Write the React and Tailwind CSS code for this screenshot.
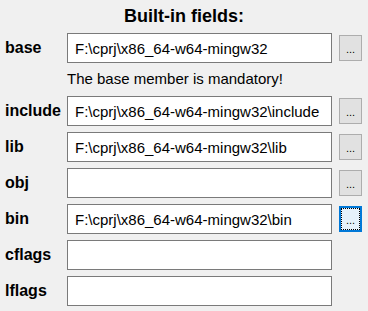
import { useState } from "react";

const fields = [
  { name: "base", value: "F:\\cprj\\x86_64-w64-mingw32", browse: true },
  { name: "include", value: "F:\\cprj\\x86_64-w64-mingw32\\include", browse: true },
  { name: "lib", value: "F:\\cprj\\x86_64-w64-mingw32\\lib", browse: true },
  { name: "obj", value: "", browse: true },
  { name: "bin", value: "F:\\cprj\\x86_64-w64-mingw32\\bin", browse: true, focused: true },
  { name: "cflags", value: "" },
  { name: "lflags", value: "" },
];

function BrowseButton({ focused }) {
  if (focused) {
    return (
      <button className="ml-[7px] w-[23px] h-[26px] border-2 border-[#0078d7] bg-[#e5f1fb] p-0">
        <div className="h-full w-full border border-dotted border-black flex items-end justify-center pb-[3px] text-[11px] leading-none text-black">
          ...
        </div>
      </button>
    );
  }
  return (
    <button className="ml-[7px] w-[23px] h-[26px] border border-[#adadad] bg-[#e1e1e1] flex items-end justify-center pb-[5px] text-[11px] leading-none text-black">
      ...
    </button>
  );
}

function FieldRow({ field }) {
  const [value, setValue] = useState(field.value);
  return (
    <div className="flex items-center h-[30px]">
      <label className="w-[67px] pl-[5px] shrink-0 text-[16px] font-bold text-black">{field.name}</label>
      <input
        value={value}
        onChange={(e) => setValue(e.target.value)}
        className="w-[265px] h-[30px] border border-[#7a7a7a] bg-white px-[7px] text-[15px] text-black outline-none"
      />
      {field.browse && <BrowseButton focused={field.focused} />}
    </div>
  );
}

export default function App() {
  return (
    <div className="w-[368px] h-[311px] bg-[#f0f0f0] font-['Liberation_Sans',Arial,sans-serif] pt-[5px] overflow-hidden">
      <h1 className="text-center text-[18px] leading-[22px] font-bold text-black">Built-in fields:</h1>
      <div className="mt-[6px] flex flex-col">
        <FieldRow field={fields[0]} />
        <p className="mt-[7px] mb-[8px] pl-[67px] text-[15px] leading-[18px] text-black">The base member is mandatory!</p>
        <div className="flex flex-col gap-[6px]">
          {fields.slice(1).map((f) => (
            <FieldRow key={f.name} field={f} />
          ))}
        </div>
      </div>
    </div>
  );
}
